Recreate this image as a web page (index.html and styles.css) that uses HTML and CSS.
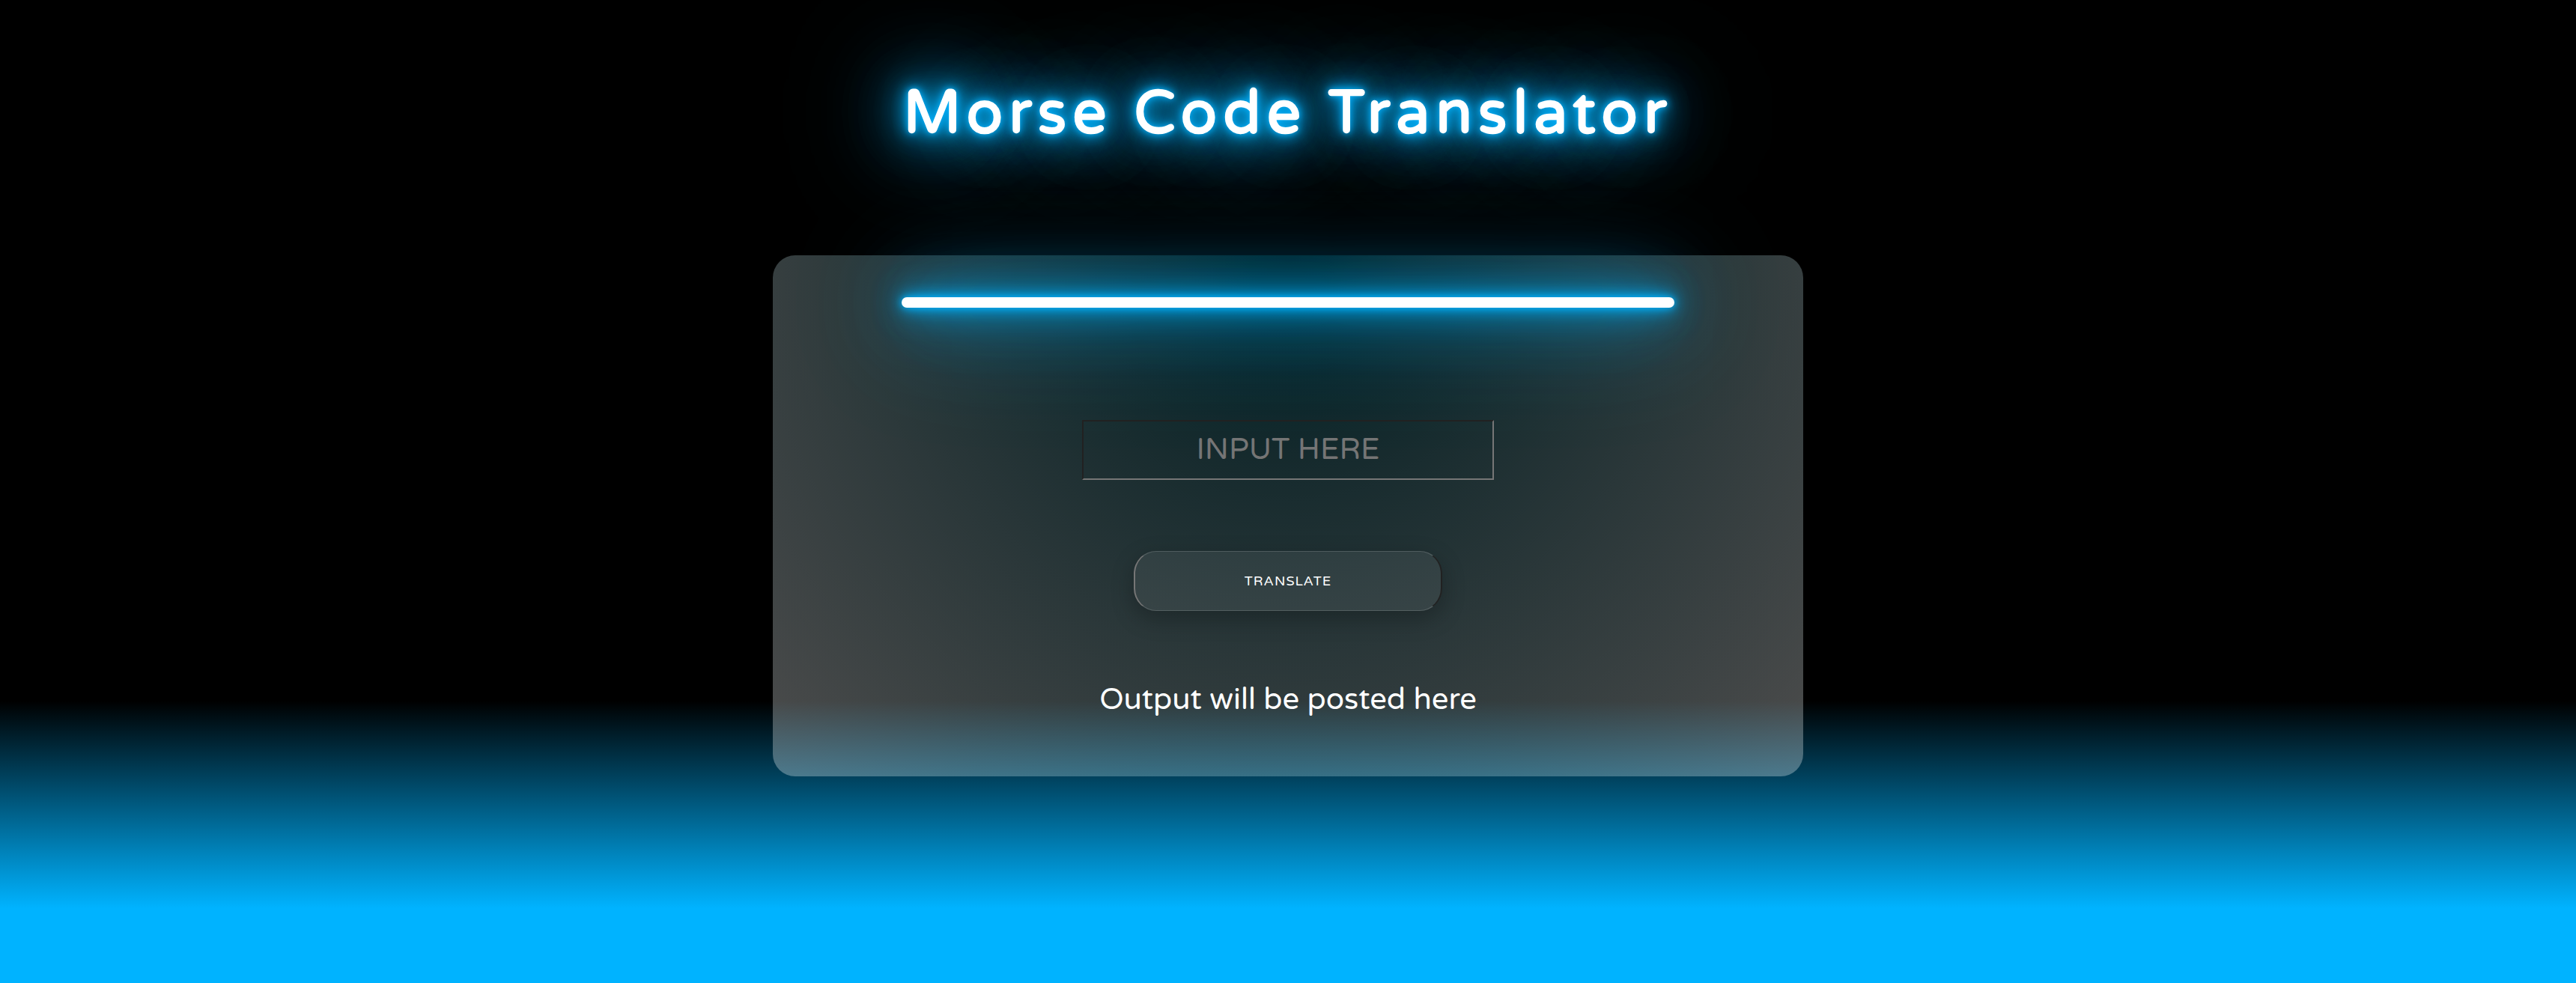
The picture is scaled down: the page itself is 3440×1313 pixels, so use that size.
FILE: index.html
```html
<!DOCTYPE html>
<html lang="en">
<head>
<meta charset="utf-8">
<meta name="viewport" content="width=device-width, initial-scale=1">
<title>Morse Code Translator</title>
<link rel="stylesheet" href="styles.css">
</head>
<body>
<h1 class="title">Morse Code Translator</h1>
<main class="card">
  <div class="neon-bar"></div>
  <form class="translator">
    <input class="field" type="text" placeholder="INPUT HERE" aria-label="Text to translate">
    <button class="translate" type="button">TRANSLATE</button>
    <output class="output">Output will be posted here</output>
  </form>
</main>
</body>
</html>
```
FILE: styles.css
```css
* {
  box-sizing: border-box;
}

:root {
  --neon: #00b3ff;
  --glow: 0 0 10px var(--neon), 0 0 20px var(--neon), 0 0 40px var(--neon), 0 0 80px var(--neon), 0 0 120px var(--neon), 0 0 160px var(--neon);
}

body {
  margin: 0;
  min-height: 100vh;
  display: flex;
  flex-direction: column;
  align-items: center;
  background: linear-gradient(#000 71.3%, var(--neon) 92.4%);
  color: #fff;
  font-family: "Varela Round", Inter, sans-serif;
}

.title {
  margin: 102px 0 139px;
  font-size: 80px;
  line-height: 100px;
  font-weight: 700;
  letter-spacing: 8px;
  text-align: center;
  text-shadow: var(--glow);
}

.card {
  width: 40%;
  min-width: 600px;
  padding: 56px 0 79px;
  display: flex;
  flex-direction: column;
  align-items: center;
  border-radius: 30px;
  background: radial-gradient(circle at top, rgba(0, 220, 255, 0.13), rgba(255, 255, 255, 0.3));
}

.neon-bar {
  width: 75%;
  height: 14px;
  border-radius: 7px;
  background: #fff;
  box-shadow: var(--glow);
}

.translator {
  width: 100%;
  margin-top: 150px;
  display: flex;
  flex-direction: column;
  align-items: center;
}

.field {
  width: 40%;
  height: 80px;
  padding: 0 8px 2px;
  border: 2px inset #767676;
  background: none;
  color: #fff;
  font: inherit;
  font-size: 40px;
  text-align: center;
}

.field::placeholder {
  color: #757575;
}

.translate {
  width: 30%;
  height: 80px;
  margin: 95px 0 94px;
  border: 2px outset #767676;
  border-top: 1px solid rgba(255, 255, 255, 0.15);
  border-bottom: 1px solid rgba(255, 255, 255, 0.15);
  border-radius: 30px;
  background: rgba(255, 255, 255, 0.07);
  box-shadow: 0 10px 30px rgba(0, 0, 0, 0.25);
  color: #fff;
  font: inherit;
  font-size: 18px;
  letter-spacing: 1px;
}

.output {
  font-size: 40px;
  line-height: 48px;
}
```
